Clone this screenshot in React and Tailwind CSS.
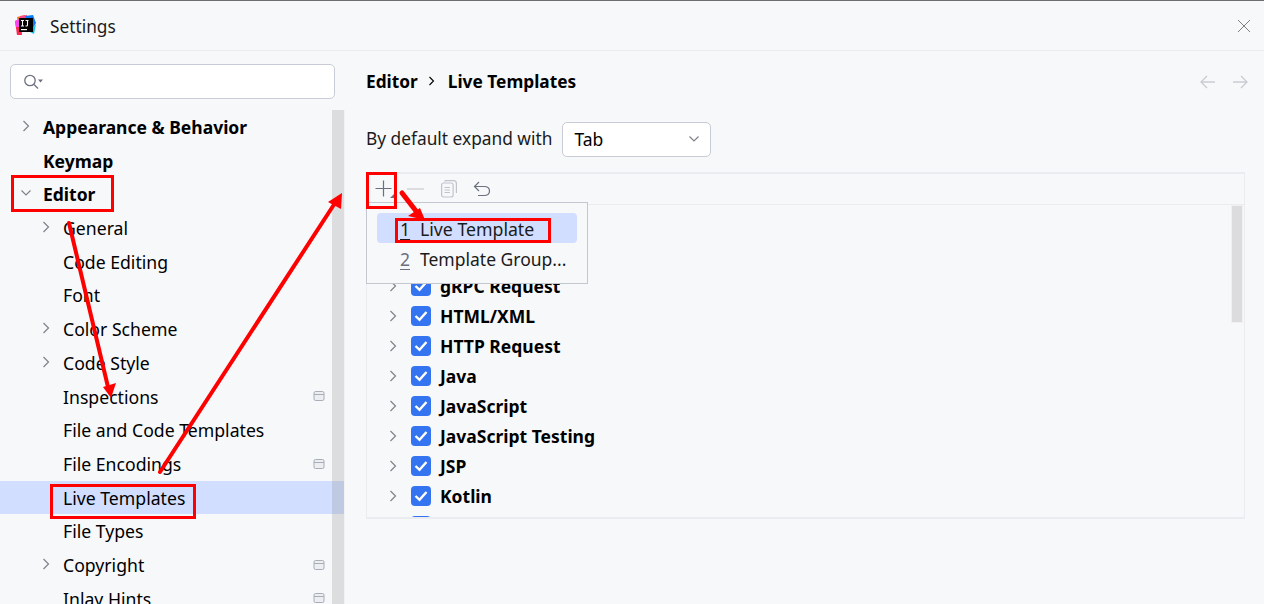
const font = { fontFamily: '"Noto Sans", "Open Sans", sans-serif' };

function Chevron({ down, className = "" }) {
  return (
    <svg width="12" height="12" viewBox="0 0 12 12" fill="none" stroke="#7f8289" strokeWidth="1.2" className={className}>
      {down ? <path d="M1.5 3.5 L6 8 L10.5 3.5" /> : <path d="M3.5 1 L8.5 6 L3.5 11" />}
    </svg>
  );
}

function ProjIcon() {
  return (
    <svg width="12" height="12" viewBox="0 0 12 12" fill="none" className="absolute left-[313px] top-1/2 -translate-y-1/2">
      <rect x="1" y="1.5" width="10" height="9" rx="1.5" fill="#eceef2" stroke="#a8adb8" />
      <path d="M1 4.5 H11" stroke="#a8adb8" />
    </svg>
  );
}

const tree = [
  { t: "Appearance & Behavior", b: true, arrow: "r", lvl: 0 },
  { t: "Keymap", b: true, lvl: 0 },
  { t: "Editor", b: true, arrow: "d", lvl: 0 },
  { t: "General", arrow: "r", lvl: 1 },
  { t: "Code Editing", lvl: 1 },
  { t: "Font", lvl: 1 },
  { t: "Color Scheme", arrow: "r", lvl: 1 },
  { t: "Code Style", arrow: "r", lvl: 1 },
  { t: "Inspections", lvl: 1, p: true },
  { t: "File and Code Templates", lvl: 1 },
  { t: "File Encodings", lvl: 1, p: true },
  { t: "Live Templates", lvl: 1, sel: true },
  { t: "File Types", lvl: 1 },
  { t: "Copyright", arrow: "r", lvl: 1, p: true },
  { t: "Inlay Hints", lvl: 1, p: true },
];

const groups = ["gRPC Request", "HTML/XML", "HTTP Request", "Java", "JavaScript", "JavaScript Testing", "JSP", "Kotlin", ""];

function TreeRow({ r }) {
  return (
    <div className={`relative flex items-center h-[33.7px] shrink-0 text-black ${r.sel ? "bg-[#d1deff]" : ""} ${r.b ? "font-bold" : "text-[17.65px]"}`}>
      {r.arrow && (
        <span className={`absolute top-[10px] flex ${r.lvl === 0 ? "left-[20px]" : "left-[40px]"}`}>
          <Chevron down={r.arrow === "d"} />
        </span>
      )}
      <span className={`pt-[2px] ${r.lvl === 0 ? "pl-[43px]" : "pl-[63px]"}`}>{r.t}</span>
      {r.p && <ProjIcon />}
    </div>
  );
}

function Check() {
  return (
    <span className="flex items-center justify-center w-[20px] h-[20px] rounded-[4px] bg-[#3574f0] shrink-0">
      <svg width="16" height="16" viewBox="0 0 16 16" fill="none" stroke="#fff" strokeWidth="2.4">
        <path d="M2.5 8 L6.5 11.8 L13.5 4" />
      </svg>
    </span>
  );
}

export default function App() {
  return (
    <div className="relative w-[1264px] h-[604px] overflow-hidden bg-[#f7f8fa] text-[17.5px] leading-none text-black flex flex-col" style={font}>
      <div className="h-[51px] shrink-0 flex items-center border-t border-t-[#6e6e6e] border-b border-b-[#ebecf0] pl-[15px] pr-[13px]">
        <svg width="21" height="21" viewBox="0 0 21 21" className="shrink-0">
          <path d="M2 2 L10 0 L11 6 L3 8 Z" fill="#f97a12" />
          <path d="M5 1 L12 0 L11 5 L5 5 Z" fill="#fe4a8a" />
          <path d="M10 1 L18 0 L21 8 L18 13 L14 8 Z" fill="#087cfa" />
          <path d="M0 6 L6 4 L7 20 L2 20 Z" fill="#fe2857" />
          <path d="M0 6 L4 4 L4 12 L1 12 Z" fill="#ff45ed" />
          <path d="M15 17 L21 9 L19 19 Z" fill="#07c3f2" />
          <rect x="4" y="3" width="14" height="14" fill="#000" />
          <rect x="6" y="14" width="6" height="1.2" fill="#fff" />
          <path d="M6 5.5 H9 M7.5 5.5 V11 M6 11 H9 M10.5 5.5 H13.5 M12.5 5.5 V10 Q12.5 11 11.5 11 H10.5" stroke="#fff" strokeWidth="1.1" fill="none" />
        </svg>
        <span className="ml-[14px] pt-[2px] text-[#1b1b1b] text-[17.3px]">Settings</span>
        <svg width="14" height="14" viewBox="0 0 14 14" className="ml-auto" stroke="#7d7f85" strokeWidth="1" fill="none">
          <path d="M1 1 L13 13 M13 1 L1 13" />
        </svg>
      </div>

      <div className="flex flex-1 min-h-0">
        <div className="w-[345px] shrink-0 flex flex-col relative">
          <div className="pl-[10px] pr-[10px] pt-[13px] pb-[11px] shrink-0">
            <div className="h-[35px] rounded-[5px] bg-white border border-[#c9ccd6] flex items-center pl-[12px]">
              <svg width="22" height="18" viewBox="0 0 22 18" fill="none" stroke="#6c707e" strokeWidth="1.3">
                <circle cx="7" cy="7.5" r="5.2" />
                <path d="M11 11.5 L15 15.5" />
                <path d="M15 6.5 H20 L17.5 9.5 Z" fill="#6c707e" stroke="none" />
              </svg>
            </div>
          </div>
          <div className="flex flex-col flex-1 min-h-0 overflow-hidden relative">
            {tree.map((r) => <TreeRow key={r.t} r={r} />)}
            <div className="absolute right-0 top-0 bottom-0 w-[13px] bg-[#8c8c8c]/25 border-r border-[#f2f2f2]" />
          </div>
        </div>

        <div className="flex-1 min-w-0 pl-[21px] pr-[19px] flex flex-col">
          <div className="h-[62px] shrink-0 flex items-center font-bold pb-[1px] text-[17.3px]">
            <span>Editor</span>
            <svg width="10" height="12" viewBox="0 0 10 12" fill="none" stroke="#000" strokeWidth="1.1" className="ml-[9px] mr-[11px] -mt-[2px]">
              <path d="M2.5 2 L6.5 6 L2.5 10" />
            </svg>
            <span>Live Templates</span>
            <svg width="16" height="14" viewBox="0 0 16 14" fill="none" stroke="#c9cbd1" strokeWidth="1.3" className="ml-auto mr-[16px]">
              <path d="M1 7 H15 M7 1 L1 7 L7 13" />
            </svg>
            <svg width="16" height="14" viewBox="0 0 16 14" fill="none" stroke="#c9cbd1" strokeWidth="1.3" className="-mr-[3px]">
              <path d="M1 7 H15 M9 1 L15 7 L9 13" />
            </svg>
          </div>
          <div className="flex items-center h-[34px] mt-[9px] shrink-0">
            <span className="text-[#1b1b1b] text-[17.32px]">By default expand with</span>
            <div className="ml-[10px] w-[149px] h-[35px] rounded-[5px] bg-white border border-[#c9ccd6] flex items-center pl-[11px] pr-[10px]">
              <span className="pt-[1px]">Tab</span>
              <span className="ml-auto flex"><Chevron down /></span>
            </div>
          </div>
          <div className="mt-[16px] h-[347px] w-[879px] shrink-0 border-t-2 border-b-2 border-l border-r border-[#ebecf0] flex flex-col overflow-hidden">
            <div className="h-[31px] shrink-0 border-b border-[#ebecf0] flex items-center pl-[8px]">
              <svg width="19" height="18" viewBox="0 0 19 18" fill="none" stroke="#6c707e" strokeWidth="1.2" className="shrink-0">
                <path d="M8.5 0.5 V16.5 M0.5 8.5 H16.5" />
                <path d="M19 14 V18 H15 Z" fill="#6c707e" stroke="none" />
              </svg>
              <svg width="17" height="16" viewBox="0 0 17 16" fill="none" stroke="#c9cbd1" strokeWidth="1.2" className="ml-[13px] shrink-0">
                <path d="M0 8 H17" />
              </svg>
              <svg width="16" height="18" viewBox="0 0 16 18" fill="none" stroke="#c0c3ca" strokeWidth="1.2" className="ml-[17px] shrink-0">
                <rect x="0.6" y="3" width="11.5" height="14" rx="2" />
                <path d="M3.5 1.5 Q4 0.6 5 0.6 H12.5 Q15.4 0.6 15.4 3.5 V13" />
                <path d="M3.5 7.5 H9 M3.5 10 H9 M3.5 12.5 H9" />
              </svg>
              <svg width="18" height="16" viewBox="0 0 18 16" fill="none" stroke="#6c707e" strokeWidth="1.2" className="ml-[16px] shrink-0">
                <path d="M6 1 L1.5 5.5 L6 10" />
                <path d="M1.5 5.5 H11 Q16.5 5.5 16.5 10 Q16.5 14.5 11 14.5 H5" />
              </svg>
            </div>
            <div className="relative flex-1 min-h-0 overflow-hidden pt-[67px] font-bold">
              {groups.map((g) => (
                <div key={g} className="h-[30px] flex items-center pl-[20px]">
                  <span className="flex -mt-[2px]"><Chevron /></span>
                  <span className="ml-[12px] flex -mt-[2px]"><Check /></span>
                  <span className="ml-[9px]">{g}</span>
                </div>
              ))}
              <div className="absolute right-[1px] top-0 w-[12px] h-[118px] bg-[#dcdcde] border border-[#f0f0f2]" />
            </div>
          </div>
        </div>
      </div>

      {/* popup menu */}
      <div className="absolute left-[366px] top-[202px] w-[222px] h-[82px] bg-[#f7f8fa] border border-[#c4c7d0] pt-[10px] px-[10px]">
        <div className="h-[30px] rounded-[4px] bg-[#d1deff] flex items-center pl-[23px] pt-[3px] text-[17.7px]">
          <span className="underline underline-offset-[3px] text-[#1b1b1b] w-[20px]">1</span>
          <span className="text-[#1b1b1b]">Live Template</span>
        </div>
        <div className="h-[30px] flex items-center pl-[23px] pt-[3px]">
          <span className="underline underline-offset-[3px] text-[#6c707e] w-[20px]">2</span>
          <span className="text-[#1b1b1b]">Template Group...</span>
        </div>
      </div>

      {/* annotations */}
      <div className="absolute left-[11px] top-[175px] w-[103px] h-[37px] border-[3px] border-[#ff0000]" />
      <div className="absolute left-[50px] top-[484px] w-[146px] h-[35px] border-[3px] border-[#ff0000]" />
      <div className="absolute left-[366px] top-[172px] w-[31px] h-[37px] border-[3px] border-[#ff0000]" />
      <div className="absolute left-[395px] top-[218px] w-[156px] h-[25px] border-[3px] border-[#ff0000]" />
      <svg className="absolute left-0 top-0" width="1264" height="604" fill="#ff0000" stroke="none">
        <path d="M69 223 L108 387" stroke="#ff0000" strokeWidth="4" strokeLinecap="round" />
        <path d="M103 387 L116 383 L111 398 Z" />
        <path d="M160 472 L335 203" stroke="#ff0000" strokeWidth="4" strokeLinecap="round" />
        <path d="M328 202 L341 209 L342 193 Z" />
        <path d="M402 193 L416 211" stroke="#ff0000" strokeWidth="5" strokeLinecap="round" />
        <path d="M408 216 L420 208 L425 220 Z" />
      </svg>
    </div>
  );
}
